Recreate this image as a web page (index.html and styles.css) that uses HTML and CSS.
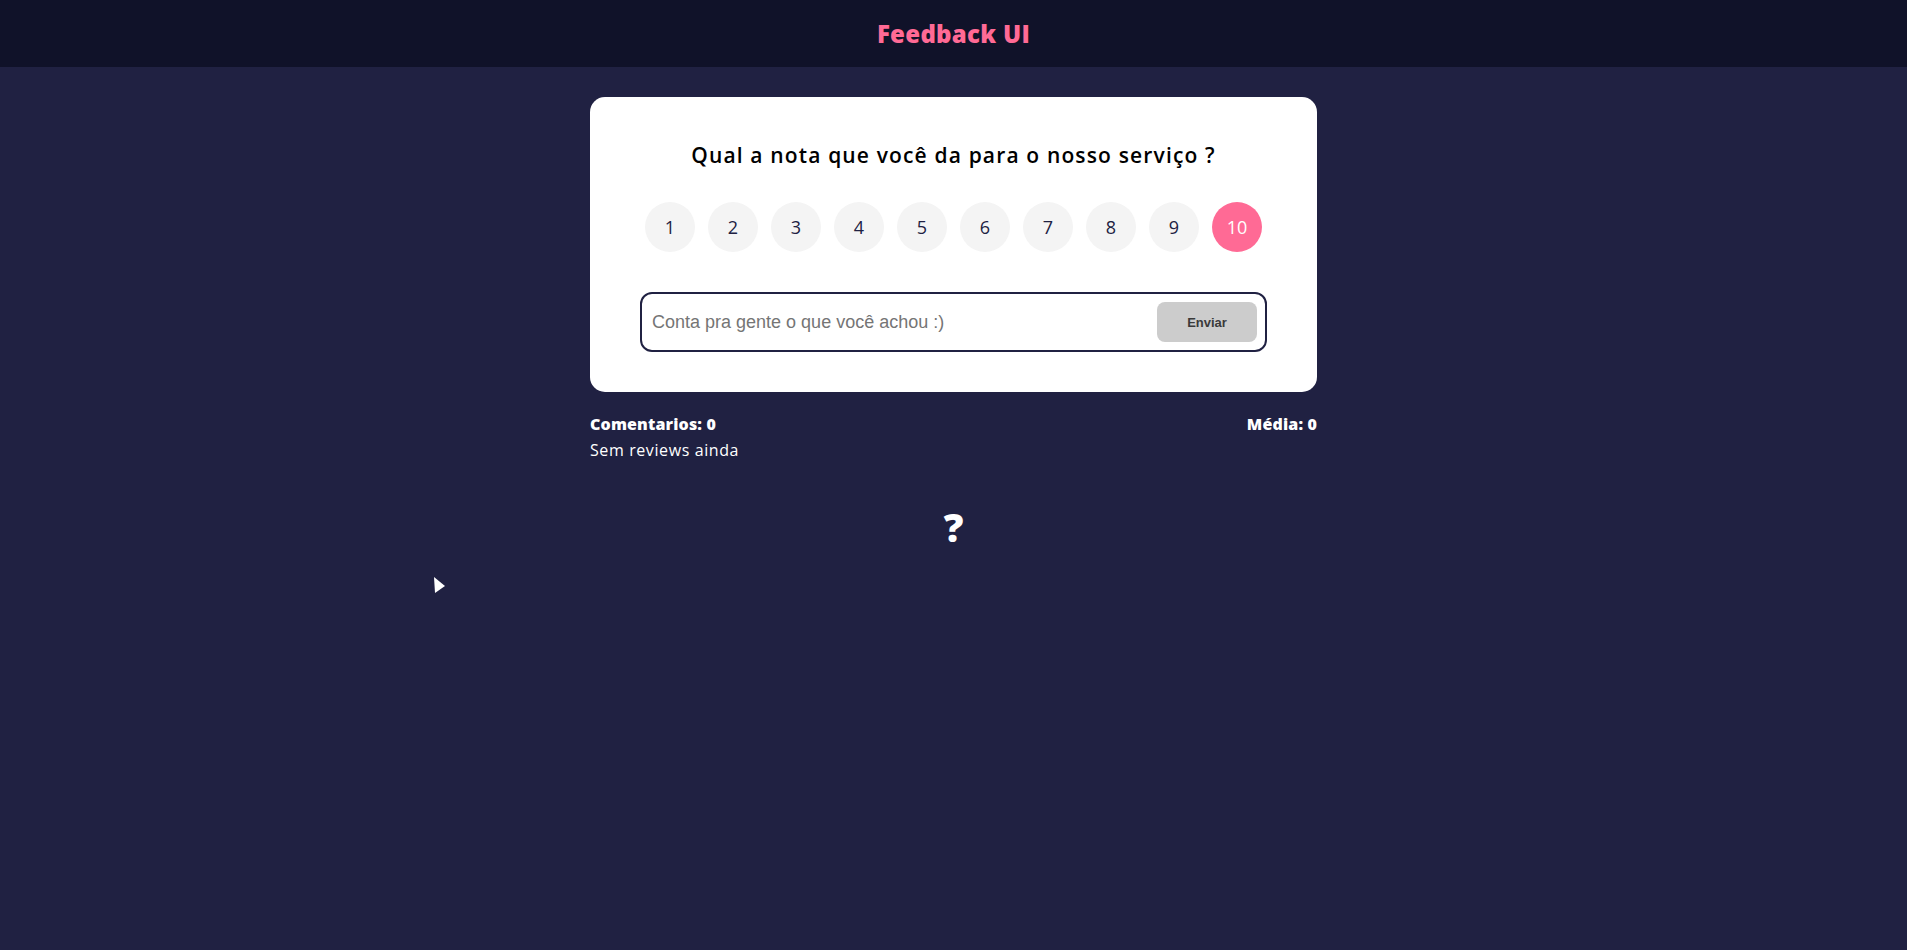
FILE: index.html
```html
<!DOCTYPE html>
<html lang="pt-BR">
<head>
<meta charset="utf-8">
<title>Feedback UI</title>
<link rel="stylesheet" href="styles.css">
</head>
<body>
<header class="topbar">
  <h1 class="brand">Feedback UI</h1>
</header>
<main class="container">
  <section class="card">
    <h2 class="question">Qual a nota que você da para o nosso serviço ?</h2>
    <ul class="rating">
      <li class="rate">1</li>
      <li class="rate">2</li>
      <li class="rate">3</li>
      <li class="rate">4</li>
      <li class="rate">5</li>
      <li class="rate">6</li>
      <li class="rate">7</li>
      <li class="rate">8</li>
      <li class="rate">9</li>
      <li class="rate selected">10</li>
    </ul>
    <form class="input-group">
      <input class="review-input" type="text" placeholder="Conta pra gente o que você achou :)">
      <button class="send-btn" type="button">Enviar</button>
    </form>
  </section>
  <div class="stats">
    <p class="stat-label">Comentarios: 0</p>
    <p class="stat-label">Média: 0</p>
  </div>
  <p class="empty">Sem reviews ainda</p>
  <div class="mystery">?</div>
</main>
<svg class="cursor" width="12" height="17" viewBox="0 0 12 17"><path d="M0 0 L11 9 L1 16 Z" fill="#ffffff"/></svg>
</body>
</html>
```
FILE: styles.css
```css
* { box-sizing: border-box; }
html, body { margin: 0; padding: 0; }
body {
  background: #202142;
  font-family: "Open Sans", "Noto Sans", sans-serif;
  color: #fff;
  min-height: 950px;
}
.topbar {
  height: 67px;
  background: #101229;
  display: flex;
  align-items: center;
  justify-content: center;
}
.brand {
  margin: 0;
  font-size: 24px;
  font-weight: 800;
  color: #ff6a95;
  line-height: 1;
  letter-spacing: 0.3px;
}
.container {
  width: 727px;
  margin: 30px auto 0;
}
.card {
  background: #fff;
  border-radius: 15px;
  padding: 40px 50px;
  color: #000;
}
.question {
  margin: 0;
  text-align: center;
  font-size: 21px;
  font-weight: 600;
  line-height: 36px;
  letter-spacing: 1.15px;
  color: #000;
}
.rating {
  list-style: none;
  margin: 29px 0 0;
  padding: 0;
  display: flex;
  justify-content: center;
  gap: 13px;
}
.rate {
  width: 50px;
  height: 50px;
  border-radius: 50%;
  background: #f4f4f4;
  color: #202142;
  font-size: 18px;
  font-weight: 400;
  display: flex;
  align-items: center;
  justify-content: center;
}
.rate.selected {
  background: #ff6a95;
  color: #fff;
}
.input-group {
  margin-top: 40px;
  height: 60px;
  border: 2px solid #202142;
  border-radius: 12px;
  display: flex;
  align-items: center;
  padding: 0 8px 0 10px;
}
.review-input {
  flex: 1;
  border: none;
  outline: none;
  font-family: "Liberation Sans", Arial, sans-serif;
  font-size: 18px;
  color: #333;
  background: transparent;
  padding: 0;
}
.review-input::placeholder { color: #757575; }
.send-btn {
  width: 100px;
  height: 40px;
  border: none;
  border-radius: 8px;
  background: #cccccc;
  color: #3a3a3a;
  font-family: "Liberation Sans", Arial, sans-serif;
  font-size: 13px;
  font-weight: 700;
}
.stats {
  margin-top: 19px;
  display: flex;
  justify-content: space-between;
}
.stat-label {
  margin: 0;
  font-size: 16px;
  font-weight: 800;
  line-height: 27px;
  letter-spacing: 0.15px;
}
.empty {
  margin: 0;
  font-size: 16px;
  line-height: 24px;
  letter-spacing: 0.6px;
}
.mystery {
  margin-top: 45px;
  text-align: center;
  font-size: 39px;
  font-weight: 800;
  line-height: 40px;
}
.cursor {
  position: absolute;
  left: 434px;
  top: 577px;
}
```
